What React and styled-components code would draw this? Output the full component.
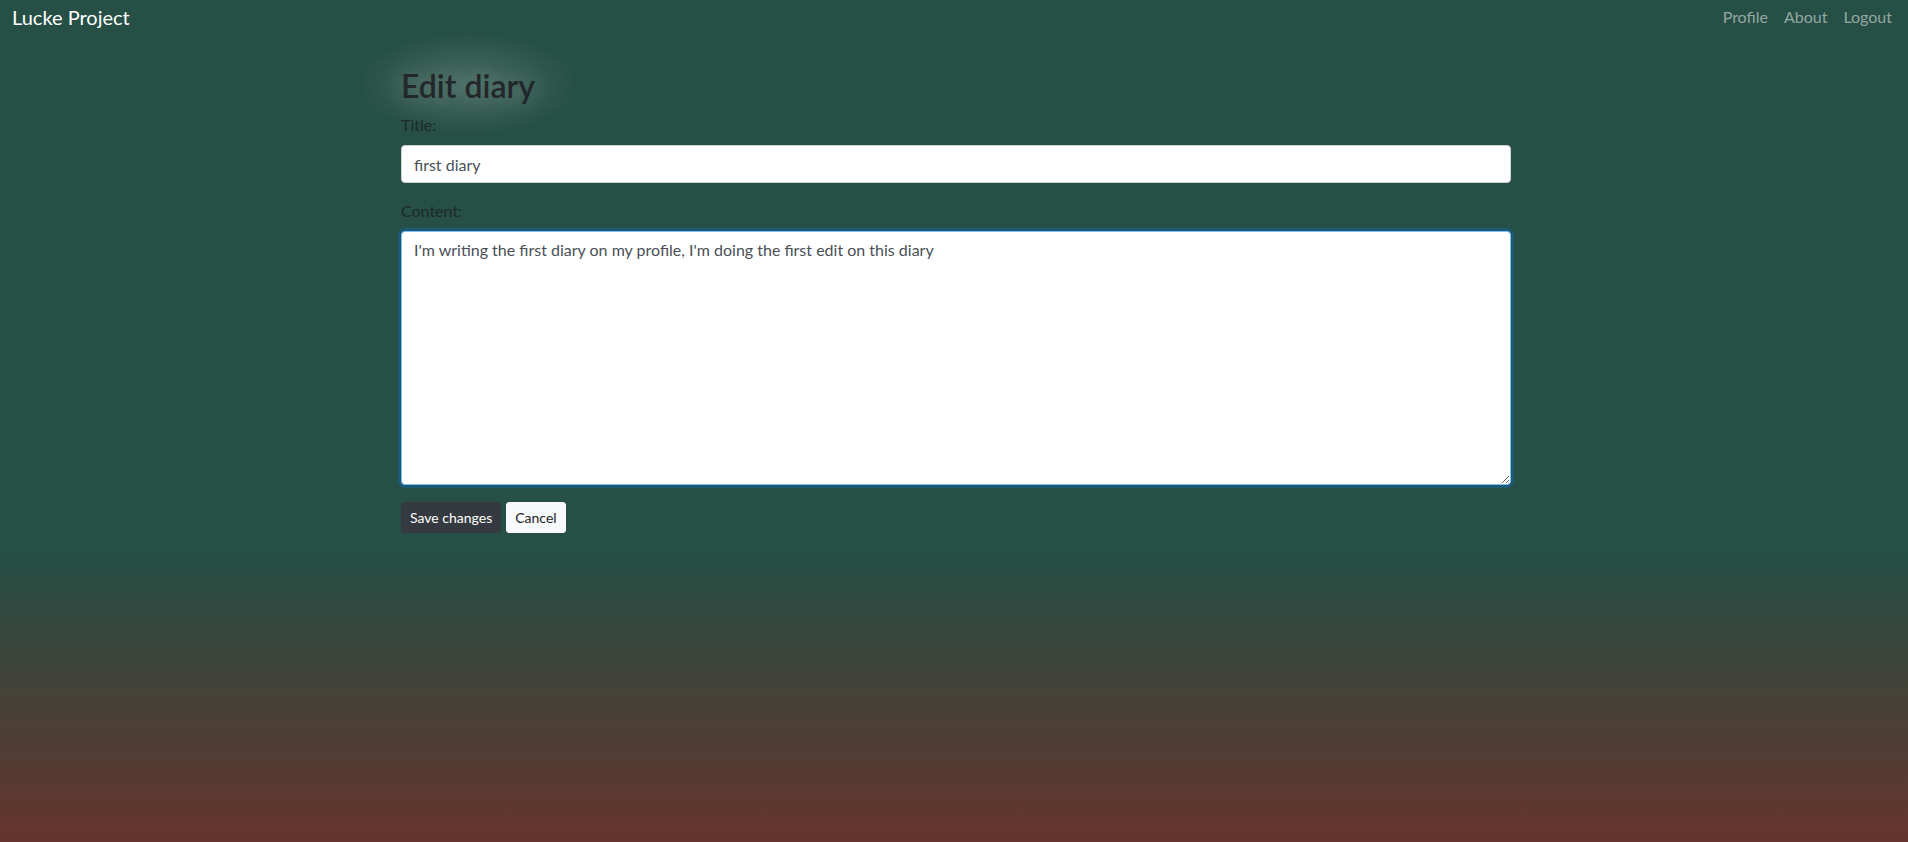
import React, { useEffect, useRef, useState } from 'react';
import styled, { createGlobalStyle } from 'styled-components';

const GlobalStyle = createGlobalStyle`
  *, *::before, *::after { box-sizing: border-box; }
  html, body { margin: 0; min-height: 100vh; }
  body {
    font-family: Lato, "Noto Sans", sans-serif;
    font-size: 16px;
    line-height: 1.5;
    color: #212529;
    background: linear-gradient(to bottom, #264f45 0%, #264f45 66%, #66342c 100%);
    background-attachment: fixed;
  }
`;

const Navbar = styled.nav`
  display: flex;
  align-items: center;
  justify-content: space-between;
  height: 33px;
  padding: 0 8px 0 12px;
`;

const Brand = styled.a`
  font-size: 20px;
  line-height: 30px;
  color: #fff;
  text-decoration: none;
  cursor: pointer;
`;

const NavLinks = styled.div`
  display: flex;
  align-items: center;
`;

const NavLink = styled.a`
  padding: 0 8px;
  font-size: 16px;
  line-height: 24px;
  color: rgba(255, 255, 255, 0.5);
  text-decoration: none;
  cursor: pointer;

  &:hover {
    color: rgba(255, 255, 255, 0.75);
  }
`;

const Container = styled.main`
  width: 1114px;
  margin: 34px auto 0;
  padding-left: 4px;
`;

const Heading = styled.h2`
  margin: 0 0 8px;
  font-size: 32px;
  font-weight: 600;
  line-height: 1.2;
  color: #22272b;
`;

const HeadingText = styled.span`
  position: relative;
  display: inline-block;
  text-shadow: 0 0 24px rgba(255, 255, 255, 0.25);

  &::before {
    content: '';
    position: absolute;
    inset: -34px -42px -30px -42px;
    z-index: -1;
    pointer-events: none;
    background: radial-gradient(
      closest-side,
      rgba(255, 255, 255, 0.16),
      rgba(255, 255, 255, 0.08) 55%,
      rgba(255, 255, 255, 0)
    );
  }
`;

const Form = styled.form`
  display: flex;
  flex-direction: column;
`;

const FormGroup = styled.div`
  display: flex;
  flex-direction: column;
  margin-bottom: 16px;
`;

const Label = styled.label`
  margin-bottom: 8px;
  color: #1f2a27;
`;

const fieldStyles = `
  width: 100%;
  padding: 6px 12px;
  font-family: Lato, "Noto Sans", sans-serif;
  font-size: 16px;
  line-height: 1.5;
  color: #495057;
  background: #fff;
  border: 1px solid #ced4da;
  border-radius: 4px;
  outline: none;
`;

const Input = styled.input`
  ${fieldStyles}
  height: 38px;
`;

const Textarea = styled.textarea`
  ${fieldStyles}
  display: block;
  resize: vertical;
  caret-color: #212529;
  border-color: ${(p) => (p.$focused ? '#80bdff' : '#ced4da')};
  box-shadow: ${(p) => (p.$focused ? '0 0 0 3px rgba(0, 123, 255, 0.25)' : 'none')};

  &:focus {
    border-color: #80bdff;
    box-shadow: 0 0 0 3px rgba(0, 123, 255, 0.25);
  }
`;

const Actions = styled.div`
  display: flex;
  gap: 5px;
  margin-top: 1px;
`;

const Button = styled.button`
  padding: 4px 8px;
  font-family: Lato, "Noto Sans", sans-serif;
  font-size: 14px;
  line-height: 21px;
  border: 1px solid ${(p) => (p.$variant === 'dark' ? '#343a40' : '#f8f9fa')};
  border-radius: 3px;
  background: ${(p) => (p.$variant === 'dark' ? '#343a40' : '#f8f9fa')};
  color: ${(p) => (p.$variant === 'dark' ? '#fff' : '#212529')};
  cursor: pointer;
`;

const App = () => {
  const [title, setTitle] = useState('first diary');
  const [content, setContent] = useState(
    "I'm writing the first diary on my profile, I'm doing the first edit on this diary"
  );
  const areaRef = useRef(null);

  useEffect(() => {
    const el = areaRef.current;
    if (el) {
      el.focus();
      el.setSelectionRange(el.value.length, el.value.length);
    }
  }, []);

  const handleSubmit = (e) => {
    e.preventDefault();
  };

  return (
    <>
      <GlobalStyle />
      <Navbar>
        <Brand>Lucke Project</Brand>
        <NavLinks>
          <NavLink>Profile</NavLink>
          <NavLink>About</NavLink>
          <NavLink>Logout</NavLink>
        </NavLinks>
      </Navbar>
      <Container>
        <Heading>
          <HeadingText>Edit diary</HeadingText>
        </Heading>
        <Form onSubmit={handleSubmit}>
          <FormGroup>
            <Label htmlFor="title">Title:</Label>
            <Input id="title" value={title} onChange={(e) => setTitle(e.target.value)} />
          </FormGroup>
          <FormGroup>
            <Label htmlFor="content">Content:</Label>
            <Textarea
              id="content"
              ref={areaRef}
              rows={10}
              $focused
              value={content}
              onChange={(e) => setContent(e.target.value)}
            />
          </FormGroup>
          <Actions>
            <Button type="submit" $variant="dark">Save changes</Button>
            <Button type="button" $variant="light">Cancel</Button>
          </Actions>
        </Form>
      </Container>
    </>
  );
};

export default App;
